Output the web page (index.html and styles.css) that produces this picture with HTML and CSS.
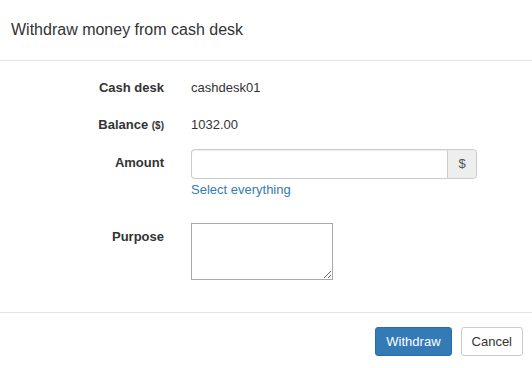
FILE: index.html
```html
<!DOCTYPE html>
<html>
<head>
<meta charset="utf-8">
<link rel="stylesheet" href="styles.css">
</head>
<body>
<div class="modal">
  <div class="modal-header">
    <h4 class="modal-title">Withdraw money from cash desk</h4>
  </div>
  <div class="modal-body">
    <div class="row row-static r1">
      <div class="label">Cash desk</div>
      <div class="value">cashdesk01</div>
    </div>
    <div class="row row-static r2">
      <div class="label">Balance <small>($)</small></div>
      <div class="value">1032.00</div>
    </div>
    <div class="row r3">
      <div class="label label-input">Amount</div>
      <div class="value">
        <div class="input-group">
          <input class="form-control" type="text">
          <span class="addon">$</span>
        </div>
        <a class="help-link" href="#">Select everything</a>
      </div>
    </div>
    <div class="row r4">
      <div class="label label-area">Purpose</div>
      <div class="value">
        <textarea class="purpose"></textarea>
      </div>
    </div>
  </div>
  <div class="modal-footer">
    <button class="btn btn-primary">Withdraw</button>
    <button class="btn btn-default">Cancel</button>
  </div>
</div>
</body>
</html>
```

FILE: styles.css
```css
* { box-sizing: border-box; }
html, body { margin: 0; padding: 0; background: #fff; }
body {
  font-family: "Liberation Sans", Arial, sans-serif;
  font-size: 13px;
  line-height: 18px;
  color: #333;
}
.modal { width: 532px; height: 368px; background: #fff; }
.modal-header {
  padding: 15px 11px;
  border-bottom: 1px solid #e5e5e5;
}
.modal-title {
  margin: 0;
  font-size: 16px;
  line-height: 30px;
  font-weight: normal;
  color: #333;
}
.modal-body {
  padding: 18px 15px 32px 15px;
  height: 251px;
}
.row {
  display: grid;
  grid-template-columns: 149px 1fr;
  column-gap: 27px;
}
.label {
  text-align: right;
  font-weight: bold;
}
.label small { font-size: 10px; }
.r2 { margin-top: 19px; }
.r3 { margin-top: 14px; }
.r4 { margin-top: 24px; }
.label-input { padding-top: 5px; }
.label-area { padding-top: 5px; }
.input-group {
  display: flex;
  width: 286px;
  height: 30px;
}
.form-control {
  flex: 1;
  min-width: 0;
  height: 30px;
  margin: 0;
  border: 1px solid #ccc;
  border-right: none;
  border-radius: 4px 0 0 4px;
  box-shadow: inset 0 1px 1px rgba(0,0,0,.075);
  font: inherit;
  padding: 5px 11px;
  outline: none;
}
.addon {
  width: 30px;
  display: flex;
  align-items: center;
  justify-content: center;
  background: #eee;
  border: 1px solid #ccc;
  border-radius: 0 4px 4px 0;
  color: #555;
}
.help-link {
  display: block;
  margin-top: 2px;
  color: #337ab7;
  text-decoration: none;
}
.purpose {
  display: block;
  width: 142px;
  height: 57px;
  margin: 0;
  border: 1px solid #a9a9a9;
  border-radius: 0;
  padding: 2px;
  font: inherit;
}
.modal-footer {
  border-top: 1px solid #e5e5e5;
  padding: 14px 9px 0 0;
  display: flex;
  justify-content: flex-end;
  gap: 9px;
}
.btn {
  height: 29px;
  padding: 0 10px;
  font-family: "Liberation Sans", Arial, sans-serif;
  font-size: 13px;
  line-height: 27px;
  border-radius: 3px;
  border: 1px solid transparent;
  cursor: pointer;
}
.btn-primary {
  background: #337ab7;
  border-color: #2e6da4;
  color: #fff;
}
.btn-default {
  background: #fff;
  border-color: #ccc;
  color: #333;
}
```
